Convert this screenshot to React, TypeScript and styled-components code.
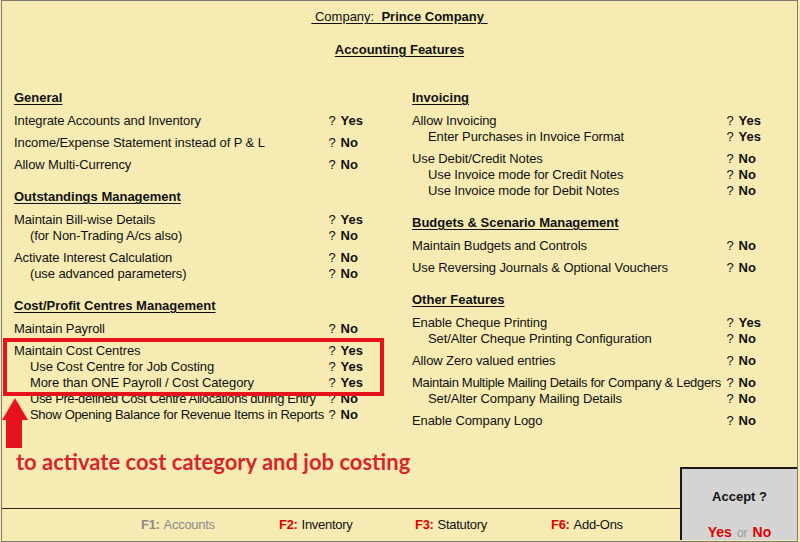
import styled, { createGlobalStyle } from "styled-components";

const GlobalStyle = createGlobalStyle`
  html, body {
    margin: 0;
    padding: 0;
    background: #f6ecb3;
  }
  body {
    font-family: "Liberation Sans", Arial, sans-serif;
    font-size: 13px;
    color: #111;
  }
`;

const Frame = styled.div`
  position: relative;
  margin-left: 1px;
  width: 797px;
  height: 542px;
  box-sizing: border-box;
  border: 1px solid #7d7b70;
  background: #f6ecb3;
  padding: 8px 0 0 12px;
  display: flex;
  flex-direction: column;
  overflow: hidden;
`;

const CompanyLine = styled.div`
  align-self: center;
  margin-left: -12px;
  line-height: 16px;
  white-space: pre;
  text-decoration: underline;
  text-underline-offset: 2px;
`;

const Title = styled.div`
  align-self: center;
  margin: 17px 0 0 -12px;
  line-height: 16px;
  font-weight: bold;
  text-decoration: underline;
  text-underline-offset: 2px;
`;

const Columns = styled.div`
  display: grid;
  grid-template-columns: 398px 1fr;
  margin-top: 32px;
`;

const Column = styled.div`
  display: flex;
  flex-direction: column;
  gap: 16px;
`;

const Section = styled.div`
  display: flex;
  flex-direction: column;
`;

const Heading = styled.div`
  font-weight: bold;
  line-height: 16px;
  margin-bottom: 7px;
  text-decoration: underline;
  text-underline-offset: 2px;
`;

const Group = styled.div`
  display: flex;
  flex-direction: column;
  & + & {
    margin-top: 6px;
  }
`;

const Row = styled.div`
  display: flex;
  line-height: 16px;
  white-space: nowrap;
`;

const Label = styled.span<{ $indent?: boolean; $spacing?: number }>`
  width: 314.5px;
  flex-shrink: 0;
  box-sizing: border-box;
  padding-left: ${(p) => (p.$indent ? "16px" : "0")};
  letter-spacing: ${(p) => p.$spacing ?? -0.1}px;
`;

const Ask = styled.span`
  width: 12px;
`;

const Value = styled.span`
  font-weight: bold;
`;

const BottomRow = styled.div`
  margin: 21px 0 0 -12px;
  display: flex;
  align-items: flex-end;
`;

const BottomLeft = styled.div`
  flex: 1;
  min-width: 0;
  display: flex;
  flex-direction: column;
  gap: 34px;
`;

const Note = styled.div`
  padding-left: 14px;
  font-family: Lato, "Open Sans", sans-serif;
  font-weight: bold;
  font-size: 22px;
  line-height: 24px;
  color: #d7262b;
`;

const KeyBar = styled.div`
  height: 32px;
  box-sizing: border-box;
  border-top: 1px solid #2a2a2a;
  padding-left: 139px;
  display: flex;
  align-items: center;
  font-family: "Liberation Sans Narrow", "Liberation Sans", Arial, sans-serif;
  font-size: 13px;
`;

const KeyItem = styled.div<{ $muted?: boolean }>`
  width: 136px;
  color: ${(p) => (p.$muted ? "#8a8a8a" : "#111")};
  letter-spacing: -0.3px;
  &:first-child {
    width: 138px;
  }
  &:last-child {
    width: auto;
  }
`;

const KeyName = styled.span<{ $muted?: boolean }>`
  font-weight: bold;
  color: ${(p) => (p.$muted ? "#8a8a8a" : "#e00000")};
  margin-right: 4px;
`;

const AcceptBox = styled.div`
  flex-shrink: 0;
  width: 117px;
  height: 73px;
  box-sizing: border-box;
  border: 2px solid #1a1a1a;
  border-right: none;
  border-bottom: none;
  background: #d4d4d4;
  display: flex;
  flex-direction: column;
  align-items: center;
  padding-top: 20px;
  gap: 19px;
  line-height: 16px;
`;

const AcceptTitle = styled.div`
  font-weight: bold;
`;

const Choice = styled.div`
  font-size: 14px;
`;

const ChoiceWord = styled.span`
  color: #e00000;
  font-weight: bold;
`;

const Or = styled.span`
  color: #9a9a9a;
  font-size: 12px;
  margin: 0 5px;
`;

const HighlightBox = styled.div`
  position: absolute;
  left: 1px;
  top: 337px;
  width: 381px;
  height: 58px;
  box-sizing: border-box;
  border: 4px solid #e8121c;
  pointer-events: none;
`;

const Arrow = styled.svg`
  position: absolute;
  left: 0;
  top: 397px;
`;

type Item = { label: string; value: "Yes" | "No"; indent?: boolean; spacing?: number };
type SectionData = { title: string; groups: Item[][] };

const leftSections: SectionData[] = [
  {
    title: "General",
    groups: [
      [{ label: "Integrate Accounts and Inventory", value: "Yes" }],
      [{ label: "Income/Expense Statement instead of P & L", value: "No" }],
      [{ label: "Allow Multi-Currency", value: "No" }],
    ],
  },
  {
    title: "Outstandings Management",
    groups: [
      [
        { label: "Maintain Bill-wise Details", value: "Yes" },
        { label: "(for Non-Trading A/cs also)", value: "No", indent: true },
      ],
      [
        { label: "Activate Interest Calculation", value: "No" },
        { label: "(use advanced parameters)", value: "No", indent: true },
      ],
    ],
  },
  {
    title: "Cost/Profit Centres Management",
    groups: [
      [{ label: "Maintain Payroll", value: "No" }],
      [
        { label: "Maintain Cost Centres", value: "Yes" },
        { label: "Use Cost Centre for Job Costing", value: "Yes", indent: true },
        { label: "More than ONE Payroll / Cost Category", value: "Yes", indent: true },
        {
          label: "Use Pre-defined Cost Centre Allocations during Entry",
          value: "No",
          indent: true,
          spacing: -0.4,
        },
        {
          label: "Show Opening Balance for Revenue Items in Reports",
          value: "No",
          indent: true,
          spacing: -0.3,
        },
      ],
    ],
  },
];

const rightSections: SectionData[] = [
  {
    title: "Invoicing",
    groups: [
      [
        { label: "Allow Invoicing", value: "Yes" },
        { label: "Enter Purchases in Invoice Format", value: "Yes", indent: true },
      ],
      [
        { label: "Use Debit/Credit Notes", value: "No" },
        { label: "Use Invoice mode for Credit Notes", value: "No", indent: true },
        { label: "Use Invoice mode for Debit Notes", value: "No", indent: true },
      ],
    ],
  },
  {
    title: "Budgets & Scenario Management",
    groups: [
      [{ label: "Maintain Budgets and Controls", value: "No" }],
      [{ label: "Use Reversing Journals & Optional Vouchers", value: "No" }],
    ],
  },
  {
    title: "Other Features",
    groups: [
      [
        { label: "Enable Cheque Printing", value: "Yes" },
        { label: "Set/Alter Cheque Printing Configuration", value: "No", indent: true },
      ],
      [{ label: "Allow Zero valued entries", value: "No" }],
      [
        {
          label: "Maintain Multiple Mailing Details for Company & Ledgers",
          value: "No",
          spacing: -0.32,
        },
        { label: "Set/Alter Company Mailing Details", value: "No", indent: true },
      ],
      [{ label: "Enable Company Logo", value: "No" }],
    ],
  },
];

function FeatureColumn({ sections }: { sections: SectionData[] }) {
  return (
    <Column>
      {sections.map((s) => (
        <Section key={s.title}>
          <Heading>{s.title}</Heading>
          {s.groups.map((g, gi) => (
            <Group key={gi}>
              {g.map((it) => (
                <Row key={it.label}>
                  <Label $indent={it.indent} $spacing={it.spacing}>
                    {it.label}
                  </Label>
                  <Ask>?</Ask>
                  <Value>{it.value}</Value>
                </Row>
              ))}
            </Group>
          ))}
        </Section>
      ))}
    </Column>
  );
}

function App() {
  return (
    <>
      <GlobalStyle />
      <Frame>
        <CompanyLine>
          {" Company:  "}
          <b>Prince Company</b>
          {" "}
        </CompanyLine>
        <Title>Accounting Features</Title>
        <Columns>
          <FeatureColumn sections={leftSections} />
          <FeatureColumn sections={rightSections} />
        </Columns>
        <BottomRow>
          <BottomLeft>
            <Note>to activate cost category and job costing</Note>
            <KeyBar>
              <KeyItem $muted>
                <KeyName $muted>F1:</KeyName>Accounts
              </KeyItem>
              <KeyItem>
                <KeyName>F2:</KeyName>Inventory
              </KeyItem>
              <KeyItem>
                <KeyName>F3:</KeyName>Statutory
              </KeyItem>
              <KeyItem>
                <KeyName>F6:</KeyName>Add-Ons
              </KeyItem>
            </KeyBar>
          </BottomLeft>
          <AcceptBox>
            <AcceptTitle>Accept ?</AcceptTitle>
            <Choice>
              <ChoiceWord>Yes</ChoiceWord>
              <Or>or</Or>
              <ChoiceWord>No</ChoiceWord>
            </Choice>
          </AcceptBox>
        </BottomRow>
        <HighlightBox />
        <Arrow width="26" height="50" viewBox="0 0 26 50">
          <polygon points="13,0 0,22 26,22" fill="#e8121c" />
          <rect x="4" y="21" width="16" height="29" fill="#e8121c" />
        </Arrow>
      </Frame>
    </>
  );
}

export default App;
